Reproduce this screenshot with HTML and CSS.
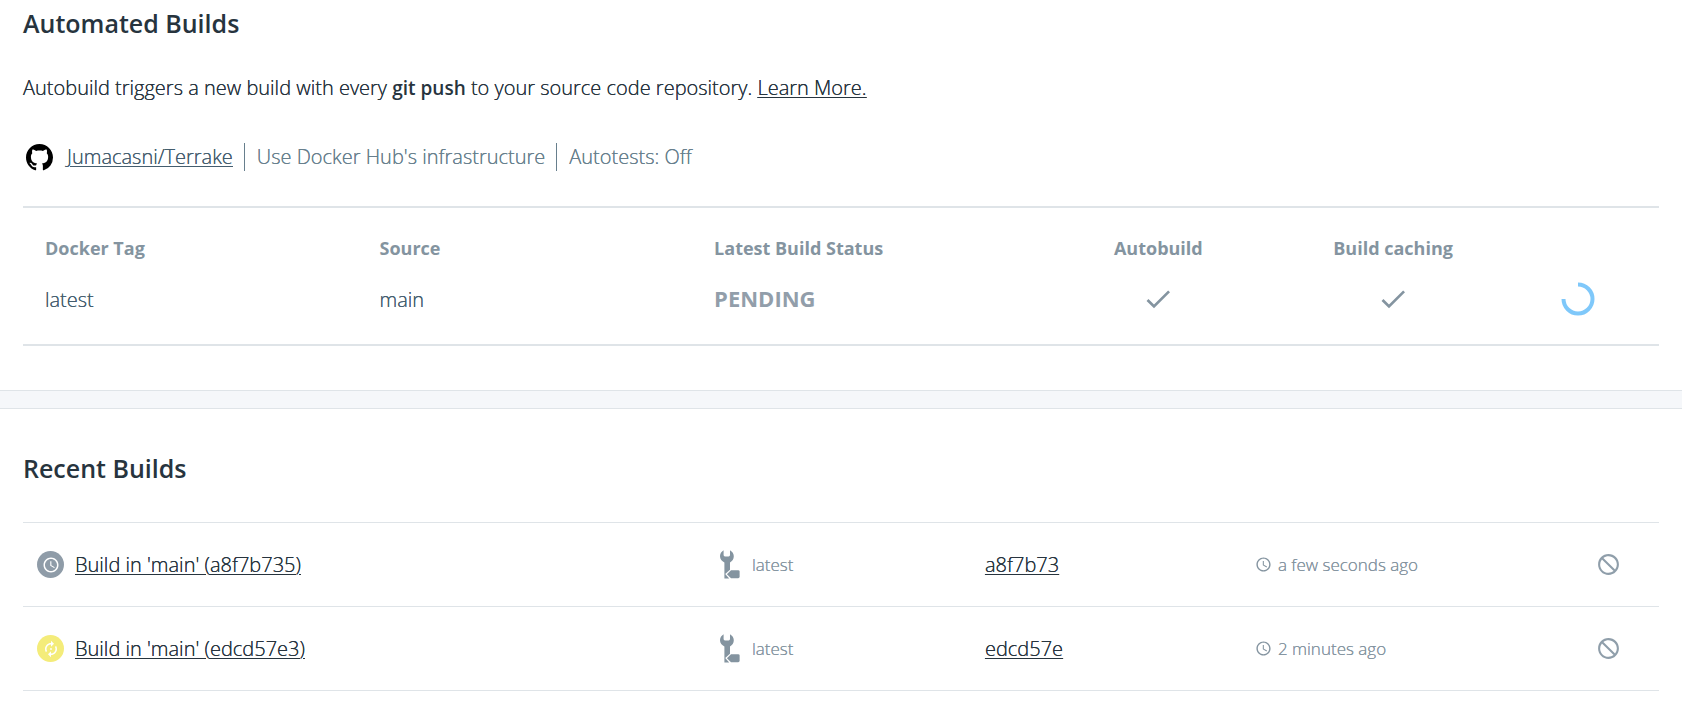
FILE: index.html
```html
<!DOCTYPE html>
<html lang="en">
<head>
<meta charset="utf-8">
<title>Automated Builds</title>
<link rel="stylesheet" href="styles.css">
</head>
<body>
<svg class="sprite" aria-hidden="true">
  <symbol id="check" viewBox="0 0 24 24"><path d="M9 16.17 4.83 12l-1.42 1.41L9 19 21 7l-1.41-1.41z"/></symbol>
  <symbol id="clock" viewBox="0 0 24 24"><path d="M11.99 2C6.47 2 2 6.48 2 12s4.47 10 9.99 10C17.52 22 22 17.52 22 12S17.52 2 11.99 2zM12 20c-4.42 0-8-3.58-8-8s3.58-8 8-8 8 3.58 8 8-3.58 8-8 8zm.5-13H11v6l5.25 3.15.75-1.23-4.5-2.67z"/></symbol>
  <symbol id="sync" viewBox="0 0 24 24"><path d="M12 6v3l4-4-4-4v3c-4.42 0-8 3.58-8 8 0 1.57.46 3.03 1.24 4.26L6.7 14.8A5.87 5.87 0 0 1 6 12c0-3.31 2.69-6 6-6zm6.76 1.74L17.3 9.2c.44.84.7 1.79.7 2.8 0 3.31-2.69 6-6 6v-3l-4 4 4 4v-3c4.42 0 8-3.58 8-8 0-1.57-.46-3.03-1.24-4.26z"/><circle cx="12" cy="12" r="1.2"/></symbol>
  <symbol id="ban" viewBox="0 0 24 24"><path d="M12 2C6.48 2 2 6.48 2 12s4.48 10 10 10 10-4.48 10-10S17.52 2 12 2zM4 12c0-4.42 3.58-8 8-8 1.85 0 3.55.63 4.9 1.69L5.69 16.9A7.9 7.9 0 0 1 4 12zm8 8a7.9 7.9 0 0 1-4.9-1.69L18.31 7.1A7.9 7.9 0 0 1 20 12c0 4.42-3.58 8-8 8z" transform="matrix(-1 0 0 1 24 0)"/></symbol>
  <symbol id="wrench" viewBox="0 0 20 29"><path d="M3.6.2V5q0 1.4 1.4 1.4h3.6Q10 6.400 10 5V.2C12.400 1.500 13.800 3.700 13.800 6.300c0 2.700-1.500 5-3.800 6.200v7.300L5.200 24l4 4.600H4.400V12.500C1.800 11.300 0 9 0 6.300 0 3.700 1.300 1.500 3.600.2z"/><path d="M11 20.200h7.200q1.400 0 1.400 1.400v5.200q0 1.400-1.400 1.400H11L6.900 24.200z"/></symbol>
</svg>

<section class="panel">
  <h2 class="title">Automated Builds</h2>
  <p class="intro">Autobuild triggers a new build with every <strong>git push</strong> to your source code repository. <a href="#">Learn More.</a></p>
  <div class="repo">
    <svg class="github" viewBox="0 0 16 16" role="img" aria-label="GitHub"><path d="M8 0C3.58 0 0 3.58 0 8c0 3.54 2.29 6.53 5.470 7.590.4.070.55-.17.55-.38 0-.19-.01-.82-.01-1.490-2.010.370-2.530-.490-2.690-.940-.090-.230-.480-.940-.820-1.130-.280-.150-.680-.520-.010-.530.630-.010 1.080.580 1.230.820.720 1.210 1.870.870 2.330.660.070-.520.280-.870.510-1.070-1.780-.200-3.640-.890-3.640-3.950 0-.870.310-1.590.820-2.150-.080-.200-.360-1.020.080-2.120 0 0 .670-.210 2.200.820.640-.180 1.320-.270 2-.270s1.360.090 2 .270c1.530-1.040 2.200-.820 2.200-.820.440 1.100.160 1.920.080 2.120.510.560.820 1.270.820 2.150 0 3.070-1.870 3.750-3.650 3.950.290.250.540.730.540 1.480 0 1.070-.010 1.930-.010 2.200 0 .210.150.460.550.380A8.010 8.010 0 0 0 16 8c0-4.420-3.580-8-8-8z"/></svg>
    <a class="repo-item" href="#">Jumacasni/Terrake</a>
    <span class="repo-item">Use Docker Hub's infrastructure</span>
    <span class="repo-item">Autotests: Off</span>
  </div>
  <table class="rules">
    <thead>
      <tr><th class="wide">Docker Tag</th><th class="wide">Source</th><th class="wide">Latest Build Status</th><th class="auto">Autobuild</th><th class="caching">Build caching</th><th class="action"></th></tr>
    </thead>
    <tbody>
      <tr>
        <td>latest</td><td>main</td><td class="status">PENDING</td>
        <td class="center"><svg class="check" role="img" aria-label="On"><use href="#check"/></svg></td>
        <td class="center"><svg class="check" role="img" aria-label="On"><use href="#check"/></svg></td>
        <td class="center"><svg class="spinner" viewBox="0 0 34 34" role="img" aria-label="Loading"><path d="M17 2.500A14.500 14.500 0 1 1 2.500 17"/></svg></td>
      </tr>
    </tbody>
  </table>
</section>

<div class="divider"></div>

<section class="panel recent">
  <h2 class="title">Recent Builds</h2>
  <table class="builds">
    <tbody>
      <tr>
        <td class="name"><div class="line"><span class="badge pending"><svg><use href="#clock"/></svg></span><a href="#">Build in 'main' (a8f7b735)</a></div></td>
        <td class="tag"><div class="line small"><svg class="wrench"><use href="#wrench"/></svg>latest</div></td>
        <td class="hash"><a href="#">a8f7b73</a></td>
        <td class="time"><div class="line small near"><svg class="clock"><use href="#clock"/></svg>a few seconds ago</div></td>
        <td class="cancel"><button type="button" aria-label="Cancel build"><svg><use href="#ban"/></svg></button></td>
      </tr>
      <tr>
        <td class="name"><div class="line"><span class="badge running"><svg><use href="#sync"/></svg></span><a href="#">Build in 'main' (edcd57e3)</a></div></td>
        <td class="tag"><div class="line small"><svg class="wrench"><use href="#wrench"/></svg>latest</div></td>
        <td class="hash"><a href="#">edcd57e</a></td>
        <td class="time"><div class="line small near"><svg class="clock"><use href="#clock"/></svg>2 minutes ago</div></td>
        <td class="cancel"><button type="button" aria-label="Cancel build"><svg><use href="#ban"/></svg></button></td>
      </tr>
    </tbody>
  </table>
</section>
</body>
</html>
```
FILE: styles.css
```css
* { box-sizing: border-box; }
body {
  margin: 0;
  background: #fff;
  color: #27343e;
  font: 300 20px/28px "Open Sans", "Noto Sans", sans-serif;
}
/* Firms up the light weight at body sizes. */
.intro, .repo, .rules td, .builds td, a, .small { text-shadow: 0 0 currentColor; }
.intro strong, .rules .status { text-shadow: none; }

.sprite { position: absolute; width: 0; height: 0; }
svg { display: block; fill: currentColor; }
a { color: inherit; text-underline-offset: 2px; text-decoration-thickness: 1px; }
.panel { padding: 7px 23px 44px; }
.title { margin: 0; font-size: 25px; line-height: 32px; font-weight: 600; }
.intro { margin: 35px 0 0; }
.intro strong { font-size: 19px; font-weight: 600; }

.repo { display: flex; align-items: center; height: 28px; margin-top: 41px; color: #677f8d; }
.github { width: 27px; height: 27px; margin: 0 2px 0 3px; color: #000; }
.repo-item { padding: 0 11px 0 12px; }
a.repo-item { color: #445d6e; }
.repo-item + .repo-item { border-left: 1px solid #677f8d; }

table { width: 100%; border-collapse: collapse; table-layout: fixed; }
.rules { margin-top: 35px; border-top: 2px solid #dfe4e8; border-bottom: 2px solid #dfe4e8; }
.rules th { padding: 24px 22px 0; height: 56px; color: #8494a0; font-size: 18px; font-weight: 700; text-align: left; }
.rules td { height: 82px; padding: 0 22px 7px; color: #445d6e; }
.rules .wide { width: 20.45%; }
.rules .auto { width: 16.1%; text-align: center; }
.rules .caching { width: 12.6%; padding: 24px 0 0; text-align: center; }
.rules .action { width: 9.95%; }
.rules .status { padding-bottom: 12px; color: #929eaa; font-size: 22px; font-weight: 700; }
.rules .center { padding-bottom: 9px; }
.check { width: 32px; height: 32px; margin: 0 auto; color: #8494a0; }
.spinner { width: 34px; height: 34px; margin: 0 auto; fill: none; stroke: #7fc8fa; stroke-width: 4; }

.divider { height: 19px; background: #f5f7fa; border: solid #dfe4e8; border-width: 1px 0; }
.recent { padding-top: 43px; }
.builds { margin-top: 38px; }
.builds tr { border-top: 1px solid #dfe4e8; border-bottom: 1px solid #dfe4e8; }
.builds td { height: 84px; padding: 0; }
.builds .name { width: 42.6%; padding-left: 14px; }
.builds .tag { width: 16.2%; }
.builds .hash { width: 16.5%; }
.builds .time { width: 18.5%; }
.builds .cancel { width: 6.2%; }
.line { display: flex; align-items: center; gap: 11px; }
.small { gap: 12px; color: #8494a0; font-size: 17px; }
.near { gap: 6px; }
.badge { display: grid; place-items: center; width: 27px; height: 27px; border-radius: 50%; color: #fff; }
.badge svg { width: 18px; height: 18px; }
.pending { background: #8f9ca8; }
.running { background: #f4ec7a; }
.wrench { width: 20px; height: 29px; }
.clock { width: 17px; height: 17px; }
.cancel button { display: block; margin: 0 auto; padding: 0; border: 0; background: none; color: #8f9eaa; cursor: pointer; }
.cancel svg { width: 25px; height: 25px; }
```
